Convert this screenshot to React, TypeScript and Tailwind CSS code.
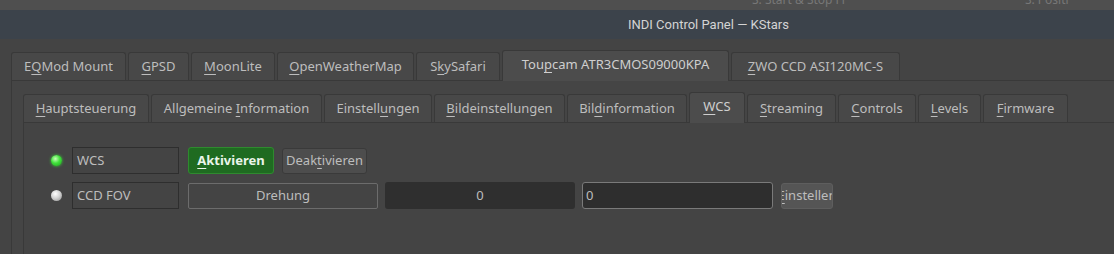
import React from "react"

const font = "font-['Noto_Sans','Roboto',sans-serif]"

type Tab = { pre: string; key: string; post: string; w: string; active?: boolean }

const outerTabs: Tab[] = [
  { pre: "E", key: "Q", post: "Mod Mount", w: "w-[115px]" },
  { pre: "", key: "G", post: "PSD", w: "w-[61px]" },
  { pre: "", key: "M", post: "oonLite", w: "w-[84px]" },
  { pre: "", key: "O", post: "penWeatherMap", w: "w-[137px]" },
  { pre: "S", key: "k", post: "ySafari", w: "w-[84px]" },
  { pre: "Tou", key: "p", post: "cam ATR3CMOS09000KPA", w: "w-[227px]", active: true },
  { pre: "", key: "Z", post: "WO CCD ASI120MC-S", w: "w-[169px]" },
]

const innerTabs: Tab[] = [
  { pre: "", key: "H", post: "auptsteuerung", w: "w-[126px]" },
  { pre: "Allgemeine ", key: "I", post: "nformation", w: "w-[171px]" },
  { pre: "Einstell", key: "u", post: "ngen", w: "w-[108px]" },
  { pre: "", key: "B", post: "ildeinstellungen", w: "w-[131px]" },
  { pre: "Bil", key: "d", post: "information", w: "w-[120px]" },
  { pre: "", key: "W", post: "CS", w: "w-[56px]", active: true },
  { pre: "", key: "S", post: "treaming", w: "w-[89px]" },
  { pre: "", key: "C", post: "ontrols", w: "w-[78px]" },
  { pre: "", key: "L", post: "evels", w: "w-[63px]" },
  { pre: "", key: "F", post: "irmware", w: "w-[85px]" },
]

function Label({ t }: { t: Tab }) {
  return (
    <span className="whitespace-nowrap">
      {t.pre}
      <span className="underline underline-offset-[3px] decoration-1">{t.key}</span>
      {t.post}
    </span>
  )
}

function TabBar({ tabs }: { tabs: Tab[] }) {
  return (
    <div className="flex items-end gap-[2px]">
      {tabs.map((t, i) =>
        t.active ? (
          <div
            key={i}
            className={`${t.w} h-[31px] -mb-px flex items-center justify-center rounded-t-[3px] border border-b-0 border-[#393939] bg-[#4c4c4c] text-[#cfcfcf] pb-[3px]`}
          >
            <Label t={t} />
          </div>
        ) : (
          <div
            key={i}
            className={`${t.w} h-[28px] flex items-center justify-center rounded-t-[3px] border border-b-0 border-[#393939] bg-[#484848] text-[#bdbdbd]`}
          >
            <Label t={t} />
          </div>
        )
      )}
    </div>
  )
}

function Led({ on }: { on: boolean }) {
  return (
    <div
      className={
        on
          ? "w-[11px] h-[11px] rounded-full bg-[radial-gradient(circle_at_40%_35%,#c8ffb8,#3fe13a_45%,#1f9a1f)] shadow-[0_0_3px_#3ad43a]"
          : "w-[11px] h-[11px] rounded-full bg-[radial-gradient(circle_at_40%_35%,#ffffff,#d4d4d4_45%,#8a8a8a)]"
      }
    />
  )
}

export default function App() {
  return (
    <div className={`${font} w-[1114px] h-[254px] overflow-hidden bg-[#444444] text-[13px] text-[#bdbdbd]`}>
      <div className="h-[10px] bg-[#4f4f4f] overflow-hidden flex text-[#777777] text-[12px] leading-[16px]">
        <span className="ml-[752px] -mt-[8px] whitespace-nowrap">S: Start &amp; Stop Fl</span>
        <span className="ml-[180px] -mt-[8px] whitespace-nowrap">S: Positi</span>
      </div>
      <div className="h-[29px] bg-[#3c434b] flex items-center pl-[628px] text-[#d4d4d4] text-[13px] font-['Roboto',sans-serif]">
        INDI Control Panel — KStars
      </div>

      <div className="pl-[11px] pt-[11px]">
        <TabBar tabs={outerTabs} />
        <div className="border-l border-t border-[#393939] bg-[#454545] pl-[11px] pt-[11px] h-[200px]">
          <TabBar tabs={innerTabs} />
          <div className="border-l border-t border-[#393939] bg-[#444444] h-[140px] pl-[27px] pt-[24px] flex flex-col gap-[8px]">
            <div className="flex items-center h-[27px]">
              <Led on />
              <div className="ml-[10px] w-[107px] h-[27px] border border-[#2e2e2e] flex items-center px-[4px]">WCS</div>
              <div className="ml-[9px] w-[86px] h-[27px] rounded-[3px] border border-[#2f8a2f] bg-[#1f6b21] text-[#eaf5ea] font-bold flex items-center justify-center">
                <span>
                  <span className="underline underline-offset-[3px] decoration-1">A</span>ktivieren
                </span>
              </div>
              <div className="ml-[8px] w-[85px] h-[26px] rounded-[3px] border border-[#3a3a3a] bg-[#4d4d4d] flex items-center justify-center">
                <span className="whitespace-nowrap">
                  Deak<span className="underline underline-offset-[3px] decoration-1">t</span>ivieren
                </span>
              </div>
            </div>
            <div className="flex items-center h-[27px]">
              <Led on={false} />
              <div className="ml-[10px] w-[107px] h-[27px] border border-[#2e2e2e] flex items-center px-[4px]">CCD FOV</div>
              <div className="ml-[9px] w-[190px] h-[26px] rounded-[2px] border border-[#6c6c6c] flex items-center justify-center">
                Drehung
              </div>
              <div className="ml-[7px] w-[190px] h-[27px] rounded-[3px] bg-[#2f2f2f] flex items-center justify-center">
                0
              </div>
              <div className="ml-[7px] w-[191px] h-[27px] rounded-[3px] border border-[#7a7a7a] bg-[#2e2e2e] flex items-center px-[3px]">
                0
              </div>
              <div className="ml-[8px] w-[52px] h-[26px] rounded-[3px] border border-[#5e5e5e] bg-[#555555] overflow-hidden flex items-center justify-center">
                <span className="whitespace-nowrap">
                  <span className="underline underline-offset-[3px] decoration-1">E</span>instellen
                </span>
              </div>
            </div>
          </div>
        </div>
      </div>
    </div>
  )
}
